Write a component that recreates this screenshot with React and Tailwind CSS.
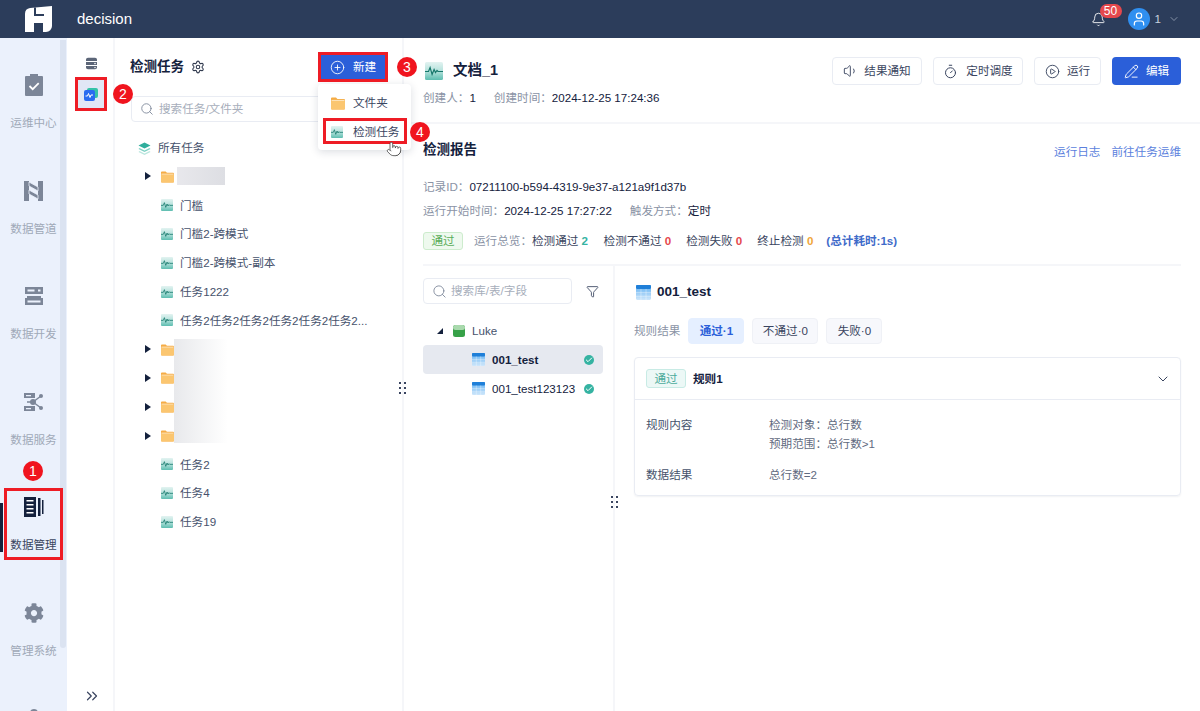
import { Bell, ChevronDown, ChevronsRight, CirclePlay, CirclePlus, Check, Funnel, PencilLine, Pointer, Search, Settings, Timer, User, Volume1 } from "lucide-react";
import { FaCog } from "react-icons/fa";

const FONT = "font-['Liberation_Sans','Noto_Sans_CJK_SC',sans-serif]";

function TaskIcon({ size = 12 }) {
  return (
    <svg width={size} height={size} viewBox="0 0 18 18" className="shrink-0">
      <defs>
        <linearGradient id="taskbg" x1="0" y1="0" x2="0" y2="1">
          <stop offset="0" stopColor="#e3f3f1" />
          <stop offset="0.5" stopColor="#b5e2dc" />
          <stop offset="1" stopColor="#5dbdb0" />
        </linearGradient>
      </defs>
      <rect width="18" height="18" rx="1.5" fill="url(#taskbg)" />
      <path d="M0 9.5h3.5l1.6-4 2 7 2-5 1.4 3 1.5-2 1 1H18" fill="none" stroke="#17786c" strokeWidth="1.2" />
    </svg>
  );
}

function FolderIcon({ size = 13 }) {
  return (
    <svg width={size} height={size} viewBox="0 0 14 14" className="shrink-0">
      <path d="M0 2.5a1 1 0 0 1 1-1h4l1.4 1.5H13a1 1 0 0 1 1 1V12.5a1 1 0 0 1-1 1H1a1 1 0 0 1-1-1z" fill="#f5ac45" />
      <rect y="4.6" width="14" height="8.9" rx="1" fill="#fbc670" />
      <path d="M0.5 4.4h13" stroke="#fff3dc" strokeWidth="0.8" />
    </svg>
  );
}

function TableIcon({ size = 13 }) {
  return (
    <svg width={size} height={size} viewBox="0 0 13 13" className="shrink-0">
      <defs>
        <linearGradient id="tablebg" x1="0" y1="0" x2="0" y2="1">
          <stop offset="0" stopColor="#5fb0f2" />
          <stop offset="1" stopColor="#cfe7fb" />
        </linearGradient>
      </defs>
      <rect width="13" height="13" rx="1" fill="url(#tablebg)" />
      <rect width="13" height="3.4" rx="1" fill="#1f7fd8" />
      <path d="M4.3 3.4V13M8.7 3.4V13M0 6.6h13M0 9.8h13" stroke="#ffffff" strokeOpacity="0.45" strokeWidth="0.7" />
    </svg>
  );
}

function Badge({ n, className }) {
  return (
    <div className={`absolute z-30 w-5 h-5 rounded-full bg-[#f0141e] text-white text-[14px] flex items-center justify-center ${className}`}>
      {n}
    </div>
  );
}

function RedBox({ className }) {
  return <div className={`absolute z-20 border-[3px] border-[#ee1c25] pointer-events-none ${className}`} />;
}

function Caret() {
  return <div className="w-0 h-0 border-y-[4px] border-y-transparent border-l-[6px] border-l-[#14213d]" />;
}

const navIcons = {
  ops: (
    <svg width="20" height="24" viewBox="0 0 20 24">
      <path d="M2 3h4V1h8v2h4a1 1 0 0 1 1 1v18a1 1 0 0 1-1 1H2a1 1 0 0 1-1-1V4a1 1 0 0 1 1-1z" fill="#7c8698" />
      <path d="M5.5 13l3.2 3.2 6-6" fill="none" stroke="#fff" strokeWidth="1.8" />
    </svg>
  ),
  pipe: (
    <svg width="19" height="20" viewBox="0 0 19 20">
      <path d="M0 0h5v20H0zM14 0h5v20h-5z" fill="#7c8698" />
      <path d="M5 1l9 5v4L5 5zM5 9l9 5v4l-9-5z" fill="#7c8698" stroke="#ebf1fc" strokeWidth="0.8" />
    </svg>
  ),
  dev: (
    <svg width="20" height="18" viewBox="0 0 20 18">
      <path d="M1 0h18v7H1zM3 11h14v-2H3zM1 11h18v7H1z" fill="#7c8698" />
      <path d="M3.5 2.5h7v2h-7zM3.5 13.5h13v2h-13zM14 2.5h2.5v2H14z" fill="#ebf1fc" />
    </svg>
  ),
  service: (
    <svg width="20" height="20" viewBox="0 0 20 20">
      <path d="M0 1h11v5H0zM0 14h11v5H0z" fill="#7c8698" />
      <path d="M2 3h5v1.2H2zM2 16h5v1.2H2z" fill="#ebf1fc" />
      <circle cx="9" cy="10" r="3" fill="#7c8698" />
      <circle cx="17" cy="4" r="2" fill="#7c8698" />
      <circle cx="17" cy="16" r="2" fill="#7c8698" />
      <path d="M9 10L17 4M9 10l8 6M3 10h6" stroke="#7c8698" strokeWidth="1.4" />
    </svg>
  ),
  manage: (
    <svg width="20" height="20" viewBox="0 0 20 20">
      <rect x="0" y="0" width="12" height="20" fill="#14213d" />
      <path d="M2.5 3h7v1.5h-7zM2.5 7h7v1.5h-7zM2.5 11h7v1.5h-7zM2.5 15h7v1.5h-7z" fill="#fff" />
      <path d="M14 1h2.5v18H14zM18 3h1.5v14H18z" fill="#14213d" />
    </svg>
  ),
  system: <FaCog size={20} color="#7c8698" />,
};

const navItems = [
  ["ops", "运维中心"],
  ["pipe", "数据管道"],
  ["dev", "数据开发"],
  ["service", "数据服务"],
  ["manage", "数据管理"],
  ["system", "管理系统"],
];

function NavRail() {
  return (
    <div className="relative w-[67px] shrink-0 bg-[#ebf1fc] pt-[35px] overflow-hidden">
      <div className="absolute right-[1px] top-[2px] w-[6px] h-[608px] rounded-b-[3px] bg-[#dbe3f1]" />
      <div className="absolute left-0 top-[465px] w-[3px] h-[49px] bg-[#14213d]" />
      {navItems.map(([key, label]) => (
        <div key={key} className="relative h-[105.6px] flex flex-col items-center">
          <div className="h-[24px] flex items-center justify-center">{navIcons[key]}</div>
          <div className={`mt-[18px] text-[11.6px] leading-[16px] ${key === "manage" ? "text-[#3a4560]" : "text-[#a0a9b8]"}`}>{label}</div>
        </div>
      ))}
      <div className="relative mx-auto mt-[2px] w-[8px] h-[8px] rounded-full bg-[#7c8698]" />
    </div>
  );
}

function SubRail() {
  return (
    <div className="w-[48px] shrink-0 bg-white border-r-2 border-[#f5f6f9] flex flex-col items-center pt-[19px] pl-[2px]">
      <svg width="13" height="13" viewBox="0 0 13 16" preserveAspectRatio="none">
        <path d="M1 3a2 2 0 0 1 2-2h7a2 2 0 0 1 2 2v2H1zM1 6.2h11v3.6H1zM1 11h11v2a2 2 0 0 1-2 2H3a2 2 0 0 1-2-2z" fill="#5c6678" />
        <circle cx="10" cy="8" r="0.8" fill="#fff" />
        <circle cx="10" cy="13" r="0.8" fill="#fff" />
      </svg>
      <div className="mt-[8px] w-[31px] h-[33px] bg-[#e1e7f5] flex items-center justify-center">
        <svg width="14" height="13" viewBox="0 0 14 13">
          <rect x="3" y="0" width="11" height="10" rx="2" fill="#35c2a8" />
          <rect x="0" y="2" width="11" height="11" rx="2" fill="#2a6bf0" />
          <path d="M1.5 8h2l1-2.5 1.5 4 1-2.5h2" fill="none" stroke="#fff" strokeWidth="1" />
        </svg>
      </div>
      <div className="flex-1" />
      <ChevronsRight size={18} strokeWidth={1.6} className="mb-[6px] ml-[2px] text-[#3a4560]" />
    </div>
  );
}

function TreeRow({ children }) {
  return <div className="h-[28.8px] flex items-center text-[11.6px] text-[#46526c]">{children}</div>;
}

function FolderRow({ first }) {
  return (
    <TreeRow>
      <div className="ml-[30px] mr-[10px]"><Caret /></div>
      <FolderIcon />
      {first && <div className="ml-[3px] w-[48px] h-[18px] blur-[0.5px] bg-gradient-to-r from-[#e8e8ec] to-[#dddee3]" />}
    </TreeRow>
  );
}

function TaskRow({ name }) {
  return (
    <TreeRow>
      <div className="ml-[46px] mr-[7px]"><TaskIcon /></div>
      <span className="whitespace-nowrap">{name}</span>
    </TreeRow>
  );
}

function DragDots({ className }) {
  return (
    <div className={`absolute grid grid-cols-2 gap-x-[3px] gap-y-[3px] ${className}`}>
      {[0, 1, 2, 3, 4, 5].map((i) => <div key={i} className="w-[2px] h-[2px] bg-[#3a4560]" />)}
    </div>
  );
}

function TaskPanel() {
  return (
    <div className="relative w-[289px] shrink-0 border-r-2 border-[#f5f6f9]">
      <div className="h-[58px] pl-[15px] pt-[19px] flex items-start gap-[7px]">
        <span className="text-[13.5px] leading-[20px] font-bold text-[#14213d]">检测任务</span>
        <Settings size={14} strokeWidth={1.9} className="mt-[3px] text-[#333c50]" />
      </div>
      <div className="ml-[16px] mr-[15px] h-[26px] border border-[#e9ecf3] rounded-[4px] flex items-center pl-[8px] gap-[5px] text-[11.6px] text-[#a7aebb]">
        <Search size={14} strokeWidth={1.5} className="text-[#7c8698]" />
        <span>搜索任务/文件夹</span>
      </div>
      <div className="mt-[13px] mb-[1px] h-[26px] flex items-center pl-[23px] gap-[7px] text-[11.6px] text-[#46526c]">
        <svg width="13" height="13" viewBox="0 0 13 13">
          <path d="M6.5 0.5l6 3-6 3-6-3z" fill="#2fae9c" />
          <path d="M1.5 6l5 2.5 5-2.5 1 1-6 3-6-3z" fill="#7fd1c4" />
          <path d="M1.5 9l5 2.5 5-2.5 1 1-6 3-6-3z" fill="#bce7df" />
        </svg>
        所有任务
      </div>
      <FolderRow first />
      <TaskRow name="门槛" />
      <TaskRow name="门槛2-跨模式" />
      <TaskRow name="门槛2-跨模式-副本" />
      <TaskRow name="任务1222" />
      <TaskRow name="任务2任务2任务2任务2任务2任务2..." />
      <FolderRow />
      <FolderRow />
      <FolderRow />
      <FolderRow />
      <TaskRow name="任务2" />
      <TaskRow name="任务4" />
      <TaskRow name="任务19" />
      {/* redacted folder names */}
      <div className="absolute left-[59px] top-[301px] w-[54px] h-[104px] bg-gradient-to-r from-[#e8e9ec] to-white" />
      <DragDots className="right-[-4px] top-[344px]" />
    </div>
  );
}

function ToolButton({ icon, label, className }) {
  return (
    <button className={`h-[28px] border border-[#e9ecf3] rounded-[4px] bg-white flex items-center justify-center text-[11.6px] text-[#3a4560] ${className}`}>
      {icon}
      {label}
    </button>
  );
}

function Tab({ children, active, className }) {
  return (
    <div className={`h-[26px] rounded-[4px] border flex items-center justify-center text-[11.6px] ${active ? "bg-[#e5efff] border-[#e5efff] text-[#2b5fd9] font-bold" : "bg-[#f7f8fc] border-[#eff1f6] text-[#3a4560]"} ${className}`}>
      {children}
    </div>
  );
}

function DbRow({ name, active }) {
  return (
    <div className={`h-[29px] rounded-[4px] flex items-center pl-[49px] pr-[9px] text-[#14213d] ${active ? "bg-[#e6e9f0] font-bold" : ""}`}>
      <TableIcon />
      <span className="ml-[7px] flex-1 whitespace-nowrap">{name}</span>
      <div className="w-[10px] h-[10px] rounded-full bg-[#35b3a2] flex items-center justify-center">
        <Check size={8} strokeWidth={3} className="text-white" />
      </div>
    </div>
  );
}

function ReportPanel() {
  return (
    <div className="flex-1 min-w-0 text-[11.6px] text-[#14213d]">
      <div className="h-[86px] border-b-2 border-[#f5f6f9] pl-[19px] pr-[19px] flex justify-between">
        <div className="pt-[23px]">
          <div className="flex items-center h-[20px] pl-[2px]">
            <TaskIcon size={18} />
            <span className="ml-[10px] text-[14.5px] font-bold">文档_1</span>
          </div>
          <div className="mt-[9px] flex leading-[16px]">
            <span className="text-[#8a93a5]">创建人：</span>
            <span>1</span>
            <span className="ml-[18px] text-[#8a93a5]">创建时间：</span>
            <span>2024-12-25 17:24:36</span>
          </div>
        </div>
        <div className="pt-[19px] flex items-start gap-[11px]">
          <ToolButton className="w-[90px] gap-[5px]" icon={<Volume1 size={16} strokeWidth={1.4} />} label="结果通知" />
          <ToolButton className="w-[90px] gap-[8px]" icon={<Timer size={15} strokeWidth={1.6} />} label="定时调度" />
          <ToolButton className="w-[67px] gap-[7px]" icon={<CirclePlay size={15} strokeWidth={1.5} />} label="运行" />
          <button className="h-[28px] w-[69px] rounded-[4px] bg-[#2b5fd9] text-white flex items-center justify-center gap-[7px]">
            <PencilLine size={15} strokeWidth={1.5} />
            编辑
          </button>
        </div>
      </div>

      <div className="pl-[19px] pr-[19px]">
        <div className="h-[50px] flex justify-between items-start">
          <span className="mt-[16px] text-[13.5px] leading-[20px] font-bold">检测报告</span>
          <div className="mt-[20px] flex gap-[11px] text-[#5b7fdd] leading-[16px]">
            <span>运行日志</span>
            <span>前往任务运维</span>
          </div>
        </div>
        <div className="mt-[5px] leading-[16px]">
          <span className="text-[#8a93a5]">记录ID：</span>07211100-b594-4319-9e37-a121a9f1d37b
        </div>
        <div className="mt-[8px] leading-[16px]">
          <span className="text-[#8a93a5]">运行开始时间：</span>2024-12-25 17:27:22
          <span className="ml-[18px] text-[#8a93a5]">触发方式：</span>定时
        </div>
        <div className="mt-[12px] h-[20px] flex items-center">
          <span className="w-[40px] h-[18px] rounded-[3px] bg-[#eef9ee] border border-[#cdeccd] text-[#5aad5a] flex items-center justify-center">通过</span>
          <span className="ml-[11px] text-[#8a93a5]">运行总览：</span>
          <span className="text-[#3a4560]">检测通过 <b className="text-[#35b3a2]">2</b></span>
          <span className="ml-[15.5px] text-[#3a4560]">检测不通过 <b className="text-[#e5484d]">0</b></span>
          <span className="ml-[15px] text-[#3a4560]">检测失败 <b className="text-[#e5484d]">0</b></span>
          <span className="ml-[15px] text-[#3a4560]">终止检测 <b className="text-[#f0a63a]">0</b></span>
          <span className="ml-[13px] font-bold text-[#3f6bc9]">(总计耗时:1s)</span>
        </div>
        <div className="mt-[13px] h-[2px] bg-[#f5f6f9]" />

        <div className="flex h-[447px]">
          <div className="relative w-[192px] shrink-0 border-r-2 border-[#f5f6f9] pt-[12px] pr-[10px]">
            <div className="flex items-center">
              <div className="w-[149px] h-[26px] border border-[#e9ecf3] rounded-[4px] flex items-center pl-[8px] gap-[4px] text-[#a7aebb]">
                <Search size={15} strokeWidth={1.4} className="text-[#7c8698]" />
                搜索库/表/字段
              </div>
              <Funnel size={13} strokeWidth={1.6} className="ml-[14px] text-[#3a4560]" />
            </div>
            <div className="mt-[15px] mb-[2px] h-[24px] flex items-center pl-[14px] text-[#46526c]">
              <div className="w-0 h-0 border-b-[6px] border-b-[#14213d] border-l-[6px] border-l-transparent" />
              <svg width="12" height="12" viewBox="0 0 12 12" className="ml-[10px] mr-[7px]">
                <rect width="12" height="12" rx="2.5" fill="#37a148" />
                <rect width="12" height="5" rx="2.5" fill="#a9d9ad" />
              </svg>
              Luke
            </div>
            <DbRow name="001_test" active />
            <DbRow name="001_test123123" />
            <DragDots className="right-[-5px] top-[230px]" />
          </div>

          <div className="flex-1 min-w-0 pl-[19px]">
            <div className="mt-[17px] flex items-center h-[18px] pl-[2px]">
              <TableIcon size={15} />
              <span className="ml-[6px] text-[13.5px] font-bold">001_test</span>
            </div>
            <div className="mt-[17px] flex items-center">
              <span className="text-[#8a93a5] mr-[8px]">规则结果</span>
              <div className="flex gap-[8px]">
                <Tab active className="w-[56px]">通过·1</Tab>
                <Tab className="w-[66px]">不通过·0</Tab>
                <Tab className="w-[56px]">失败·0</Tab>
              </div>
            </div>
            <div className="mt-[13px] h-[139px] border border-[#e9ecf3] rounded-[4px] shadow-[0_1px_2px_rgba(20,33,61,0.06)]">
              <div className="h-[42px] border-b border-[#e9ecf3] pl-[11px] pr-[9px] flex items-center">
                <span className="w-[40px] h-[19px] rounded-[3px] bg-[#ecf8f6] border border-[#c8ebe5] text-[#4dab9c] flex items-center justify-center">通过</span>
                <span className="ml-[7px] font-bold flex-1">规则1</span>
                <ChevronDown size={16} strokeWidth={1.5} className="text-[#3a4560]" />
              </div>
              <div className="pl-[11px] pt-[17px] text-[#5f6a80] leading-[16px]">
                <div className="flex">
                  <span className="w-[123px] text-[#46526c]">规则内容</span>
                  <div className="space-y-[3px]">
                    <div>检测对象：总行数</div>
                    <div>预期范围：总行数&gt;1</div>
                  </div>
                </div>
                <div className="mt-[15px] flex">
                  <span className="w-[123px] text-[#46526c]">数据结果</span>
                  <span>总行数=2</span>
                </div>
              </div>
            </div>
          </div>
        </div>
      </div>
    </div>
  );
}

export default function App() {
  return (
    <div className={`relative w-[1200px] h-[711px] overflow-hidden bg-white flex flex-col ${FONT}`}>
      <header className="h-[38px] shrink-0 bg-[#2c3d5b] flex items-center pl-[25px] pr-[20px] text-white">
        <svg width="27" height="26" viewBox="0 0 27 26">
          <path d="M0 8a6 6 0 0 1 5-6L27 0v20a6 6 0 0 1-6 6h-3V17H9v9H0z" fill="#fff" />
          <path d="M9 1.5h2V8h8v2H9z" fill="#2c3d5b" />
        </svg>
        <span className="ml-[25px] text-[15px]">decision</span>
        <div className="flex-1" />
        <div className="relative mr-[22px]">
          <Bell size={15} strokeWidth={1.4} />
          <span className="absolute -top-[8px] left-[9px] h-[14px] w-[22px] text-center rounded-full bg-[#e5484d] text-[12px] leading-[14px]">50</span>
        </div>
        <div className="w-[22px] h-[22px] rounded-full bg-[#2f8ff0] flex items-center justify-center">
          <User size={16} strokeWidth={1.8} />
        </div>
        <span className="ml-[5px] text-[11.6px] text-[#c8d0de]">1</span>
        <ChevronDown size={12} strokeWidth={1.5} className="ml-[7px] text-[#a3adbf]" />
      </header>

      <div className="flex-1 min-h-0 flex">
        <NavRail />
        <SubRail />
        <TaskPanel />
        <ReportPanel />
      </div>

      {/* new button and its menu */}
      <div className="absolute z-10 left-[318px] top-[52px] w-[70px] h-[30px] bg-[#2b5fd9] text-white text-[11.6px] flex items-center pl-[12px] gap-[8px]">
        <CirclePlus size={15} strokeWidth={1.4} />
        新建
      </div>
      <div className="absolute z-10 left-[318px] top-[84px] w-[93px] h-[66px] bg-white rounded-[4px] shadow-[0_2px_8px_rgba(20,33,61,0.15)] text-[11.6px] text-[#3a4560] pt-[5px]">
        <div className="h-[28px] flex items-center pl-[13px] gap-[8px]"><FolderIcon size={14} />文件夹</div>
        <div className="h-[29px] flex items-center pl-[13px] gap-[10px]"><TaskIcon />检测任务</div>
      </div>
      <Pointer size={16} strokeWidth={1.1} fill="#fff" className="absolute z-30 left-[386px] top-[141px] text-[#333]" />

      <RedBox className="left-[4px] top-[488px] w-[59px] h-[72px]" />
      <RedBox className="left-[75px] top-[77px] w-[32px] h-[34px]" />
      <RedBox className="left-[318px] top-[52px] w-[70px] h-[30px]" />
      <RedBox className="left-[323px] top-[118px] w-[84px] h-[26px]" />
      <Badge n="1" className="left-[23px] top-[461px]" />
      <Badge n="2" className="left-[113px] top-[84px]" />
      <Badge n="3" className="left-[397px] top-[57px]" />
      <Badge n="4" className="left-[410px] top-[122px]" />
    </div>
  );
}
